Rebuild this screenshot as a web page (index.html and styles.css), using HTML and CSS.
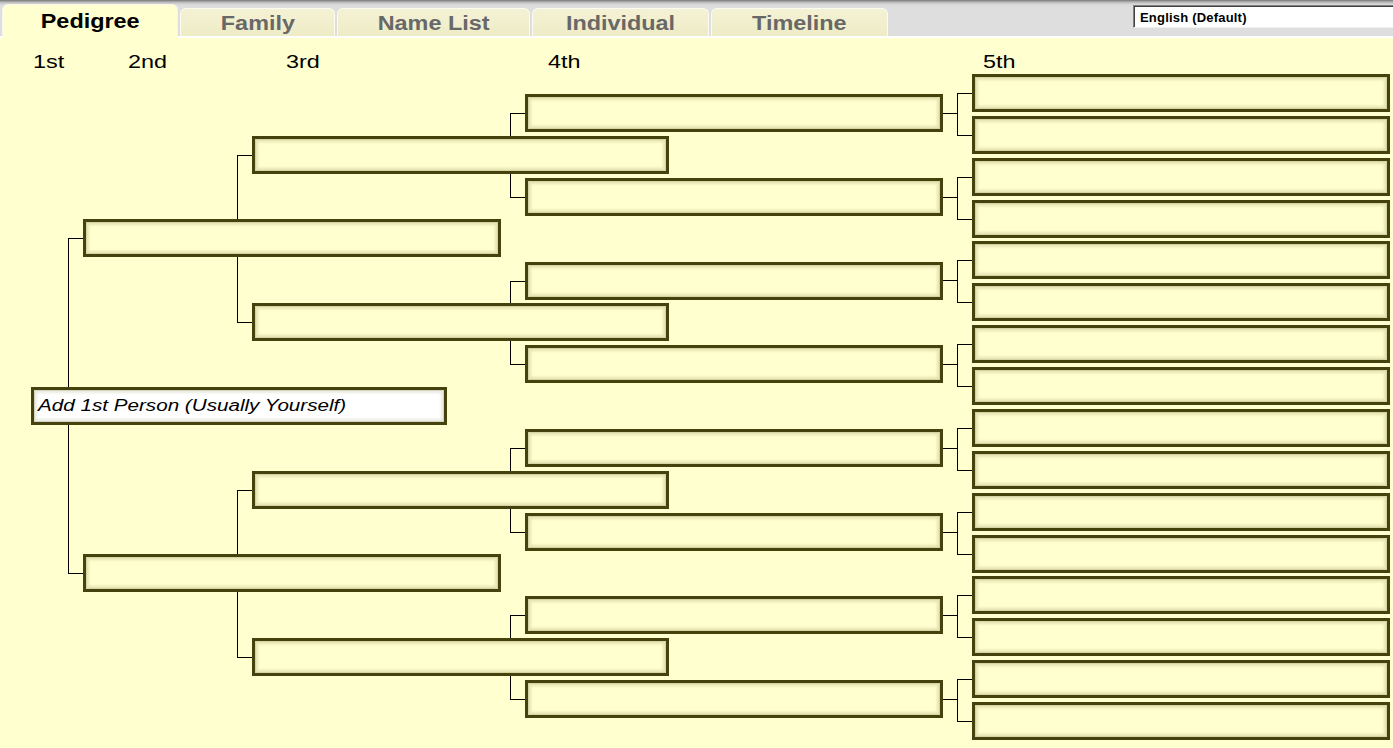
FILE: index.html
```html
<!DOCTYPE html>
<html lang="en">
<head>
<meta charset="utf-8">
<title>Pedigree</title>
<link rel="stylesheet" href="styles.css">
</head>
<body>
<div class="app">
  <div class="topbar">
    <div class="tabs">
      <div class="tab active w-ped"><span class="tl">Pedigree</span></div>
      <div class="tab w-fam"><span class="tl">Family</span></div>
      <div class="tab w-name"><span class="tl">Name List</span></div>
      <div class="tab w-ind"><span class="tl">Individual</span></div>
      <div class="tab w-time"><span class="tl">Timeline</span></div>
    </div>
    <div class="lang"><span>English (Default)</span></div>
  </div>
  <div class="content">
    <div class="chart">
      <span class="lbl l1">1st</span>
      <span class="lbl l2">2nd</span>
      <span class="lbl l3">3rd</span>
      <span class="lbl l4">4th</span>
      <span class="lbl l5">5th</span>

      <div class="br b1" style="top:200px;height:336px"></div>
      <div class="br b2" style="top:117px;height:168px"></div>
      <div class="br b2" style="top:452px;height:168px"></div>
      <div class="br b3" style="top:75px;height:85px"></div>
      <div class="br b3" style="top:243px;height:84px"></div>
      <div class="br b3" style="top:410px;height:85px"></div>
      <div class="br b3" style="top:577px;height:85px"></div>
      <div class="br b4" style="top:55px"></div>
      <div class="br b4" style="top:139px"></div>
      <div class="br b4" style="top:222px"></div>
      <div class="br b4" style="top:306px"></div>
      <div class="br b4" style="top:390px"></div>
      <div class="br b4" style="top:474px"></div>
      <div class="br b4" style="top:557px"></div>
      <div class="br b4" style="top:641px"></div>

      <div class="box g1" style="top:349px"><span class="ph">Add 1st Person (Usually Yourself)</span></div>

      <div class="box g2" style="top:181px"></div>
      <div class="box g2" style="top:516px"></div>

      <div class="box g3" style="top:98px"></div>
      <div class="box g3" style="top:265px"></div>
      <div class="box g3" style="top:433px"></div>
      <div class="box g3" style="top:600px"></div>

      <div class="box g4" style="top:56px"></div>
      <div class="box g4" style="top:140px"></div>
      <div class="box g4" style="top:224px"></div>
      <div class="box g4" style="top:307px"></div>
      <div class="box g4" style="top:391px"></div>
      <div class="box g4" style="top:475px"></div>
      <div class="box g4" style="top:558px"></div>
      <div class="box g4" style="top:642px"></div>

      <div class="box g5" style="top:36px"></div>
      <div class="box g5" style="top:78px"></div>
      <div class="box g5" style="top:120px"></div>
      <div class="box g5" style="top:162px"></div>
      <div class="box g5" style="top:203px"></div>
      <div class="box g5" style="top:245px"></div>
      <div class="box g5" style="top:287px"></div>
      <div class="box g5" style="top:329px"></div>
      <div class="box g5" style="top:371px"></div>
      <div class="box g5" style="top:413px"></div>
      <div class="box g5" style="top:455px"></div>
      <div class="box g5" style="top:497px"></div>
      <div class="box g5" style="top:538px"></div>
      <div class="box g5" style="top:580px"></div>
      <div class="box g5" style="top:622px"></div>
      <div class="box g5" style="top:664px"></div>
    </div>
  </div>
</div>
</body>
</html>
```
FILE: styles.css
```css
html, body {
  margin: 0;
  padding: 0;
  overflow: hidden;
  background: #ffffd0;
  font-family: "Liberation Sans", Arial, sans-serif;
}

.app {
  width: 1393px;
  height: 748px;
  display: flex;
  flex-direction: column;
}

.topbar {
  height: 36px;
  flex-shrink: 0;
  display: flex;
  align-items: flex-start;
  background: linear-gradient(#767676 0px, #b4b4b4 2px, #d6d6d6 4px, #dedede 6px, #dedede 100%);
  position: relative;
  z-index: 2;
}

.tabs {
  display: flex;
  align-items: flex-end;
  gap: 2px;
  padding-left: 2px;
  height: 36px;
  flex-shrink: 0;
}

.tab {
  box-sizing: border-box;
  height: 28px;
  padding-top: 2px;
  display: flex;
  align-items: center;
  justify-content: center;
  border: 1px solid #fbfbf0;
  border-bottom: none;
  border-radius: 6px 6px 0 0;
  background: linear-gradient(#f4f2d4, #eeecc6);
  color: #686868;
  font-weight: bold;
  font-size: 19.5px;
}

.tab.active {
  height: 34px;
  margin-bottom: -2px;
  padding-top: 0;
  background: #ffffd0;
  color: #000;
  border-color: #f6f6ea;
  position: relative;
  z-index: 3;
}

.w-ped { width: 176px; }
.w-fam { width: 155px; }
.w-name { width: 193px; }
.w-ind { width: 177px; }
.w-time { width: 177px; }

.tl {
  display: inline-block;
  transform: scaleX(1.2);
}

.lang {
  flex-shrink: 0;
  box-sizing: border-box;
  margin-left: 245px;
  margin-top: 5px;
  width: 280px;
  height: 23px;
  background: #fff;
  border-top: 1px solid #808080;
  border-left: 1px solid #808080;
  border-bottom: 1px solid #f0f0f0;
  border-right: 1px solid #f0f0f0;
  box-shadow: inset 1px 1px 0 #404040;
  display: flex;
  align-items: center;
  padding-left: 6px;
  padding-top: 1px;
  font-size: 13px;
  font-weight: bold;
  color: #000;
  letter-spacing: 0.2px;
}

.content {
  flex: 1;
  border-top: 2px solid #ffffff;
  background: #ffffd0;
  position: relative;
}

.chart {
  position: relative;
  height: 100%;
}

.lbl {
  position: absolute;
  top: 15px;
  font-size: 18px;
  line-height: 18px;
  color: #000;
  transform: scaleX(1.3);
  transform-origin: left center;
}
.l1 { left: 33px; }
.l2 { left: 128px; }
.l3 { left: 286px; }
.l4 { left: 548px; }
.l5 { left: 983px; }

.br {
  position: absolute;
  box-sizing: border-box;
  width: 15px;
  border: 1px solid #000;
  border-right: none;
}
.b1 { left: 68px; }
.b2 { left: 237px; }
.b3 { left: 510px; }
.b4 { left: 957px; height: 43px; }
.b4::before {
  content: "";
  position: absolute;
  left: -15px;
  top: 19px;
  width: 14px;
  height: 1px;
  background: #000;
}

.box {
  position: absolute;
  box-sizing: border-box;
  height: 38px;
  border: 3px solid #46420e;
  background: #ffffd0;
  box-shadow: inset 0 0 0 1px #d6d4a0, inset 0 0 3px 3px #e6e4b4;
}

.g1 {
  left: 31px;
  width: 416px;
  background: #ffffff;
  box-shadow: inset 0 0 0 1px #d4d4c2, inset 0 0 3px 3px #eaeae2;
  display: flex;
  align-items: center;
  padding-left: 4px;
}
.g2 { left: 83px; width: 418px; }
.g3 { left: 252px; width: 417px; }
.g4 { left: 525px; width: 418px; }
.g5 { left: 972px; width: 418px; }

.ph {
  display: inline-block;
  font-style: italic;
  font-size: 16px;
  color: #000;
  white-space: nowrap;
  transform: scaleX(1.29);
  transform-origin: left center;
}
```
